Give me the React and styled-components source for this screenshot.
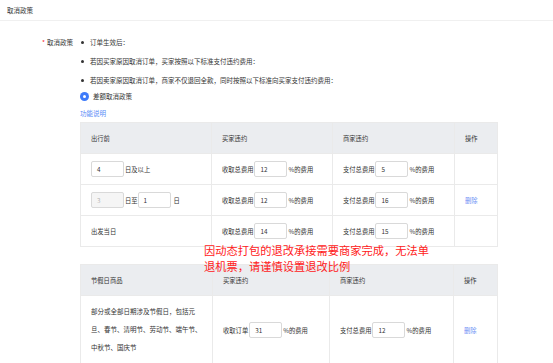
import React from "react";
import styled, { createGlobalStyle } from "styled-components";

const GlobalStyle = createGlobalStyle`
  body {
    margin: 0;
    background: #fff;
    font-family: "Noto Sans CJK SC", "Noto Sans", sans-serif;
    color: #333;
  }
`;

const Page = styled.div`
  position: relative;
  width: 553px;
  height: 363px;
  overflow: hidden;
  font-size: 6.5px;
`;

const TitleBar = styled.div`
  height: 20px;
  display: flex;
  align-items: center;
  padding-left: 7px;
  border-bottom: 1px solid #f0f0f0;
  color: #333;
`;

const FormRow = styled.div`
  display: flex;
  padding-top: 12px;
`;

const Label = styled.div`
  width: 80px;
  text-align: right;
  padding-right: 7px;
  box-sizing: border-box;
  line-height: 19px;
  &::before {
    content: "*";
    color: #f5222d;
    margin-right: 2px;
  }
`;

const Content = styled.div`
  flex: 1;
  display: flex;
  flex-direction: column;
`;

const Bullet = styled.div`
  line-height: 19px;
  display: flex;
  &::before {
    content: "";
    width: 3px;
    height: 3px;
    border-radius: 50%;
    background: #333;
    margin: 8px 6px 0 1px;
  }
`;

const Radio = styled.label`
  display: flex;
  align-items: center;
  gap: 4px;
  height: 12px;
`;

const RadioDot = styled.span`
  width: 9px;
  height: 9px;
  border-radius: 50%;
  background: #3e7bfa;
  display: flex;
  align-items: center;
  justify-content: center;
  &::after {
    content: "";
    width: 3px;
    height: 3px;
    border-radius: 50%;
    background: #fff;
  }
`;

const Link = styled.a`
  color: #5b8cf7;
  cursor: pointer;
  line-height: 18px;
  margin-top: 2px;
`;

const Table = styled.table`
  width: 417px;
  border-collapse: collapse;
  table-layout: fixed;
  font-size: 6.3px;
  margin-top: ${(p) => p.$top || 0}px;
  th, td {
    border: 1px solid #eaeaea;
    padding: 0 10px;
    text-align: left;
    font-weight: normal;
    box-sizing: border-box;
  }
  th {
    background: #ebedf0;
    height: 31px;
  }
  td {
    height: 31px;
  }
`;

const Cell = styled.div`
  display: flex;
  align-items: center;
  white-space: nowrap;
`;

const Input = styled.div`
  width: 33px;
  height: 16px;
  box-sizing: border-box;
  border: 1px solid #d9d9d9;
  border-radius: 2px;
  padding-left: 5px;
  display: flex;
  align-items: center;
  margin: ${(p) => p.$m || "0 1px 0 1px"};
  background: ${(p) => (p.$disabled ? "#f5f5f5" : "#fff")};
  color: ${(p) => (p.$disabled ? "#b5b5b5" : "#333")};
`;

const Delete = styled.a`
  color: #6f93f5;
`;

const HolidayText = styled.td`
  && {
    padding: 6px 10px 8px 10px;
    line-height: 18px;
    vertical-align: top;
    font-size: 6.5px;
  }
`;

const Notice = styled.div`
  position: absolute;
  left: 204px;
  top: 242px;
  color: #ff2020;
  font-size: 11.25px;
  line-height: 16px;
  width: 230px;
`;

const Cols = ({ w }) => (
  <colgroup>
    {w.map((x, i) => (
      <col key={i} style={{ width: x }} />
    ))}
  </colgroup>
);

const Fee = ({ label, value }) => (
  <Cell>
    {label}
    <Input>{value}</Input>
    %的费用
  </Cell>
);

const rows = [
  { day: <Cell><Input $m="0 1px 0 0">4</Input>日及以上</Cell>, buy: 12, sell: 5 },
  {
    day: <Cell><Input $m="0 1px 0 0" $disabled>3</Input>日至<Input $m="0 3px 0 0">1</Input>日</Cell>,
    buy: 12,
    sell: 16,
    del: true,
  },
  { day: <Cell>出发当日</Cell>, buy: 14, sell: 15 },
];

export default function App() {
  return (
    <Page>
      <GlobalStyle />
      <TitleBar>取消政策</TitleBar>
      <FormRow>
        <Label>取消政策</Label>
        <Content>
          <Bullet>订单生效后：</Bullet>
          <Bullet>若因买家原因取消订单，买家按照以下标准支付违约费用：</Bullet>
          <Bullet>若因卖家原因取消订单，商家不仅退回全款，同时按照以下标准向买家支付违约费用：</Bullet>
          <Radio>
            <RadioDot />
            差额取消政策
          </Radio>
          <Link>功能说明</Link>
          <Table $top={0}>
            <Cols w={[131, 121, 122, 43]} />
            <thead>
              <tr>
                <th>出行前</th>
                <th>买家违约</th>
                <th>商家违约</th>
                <th>操作</th>
              </tr>
            </thead>
            <tbody>
              {rows.map((r, i) => (
                <tr key={i}>
                  <td>{r.day}</td>
                  <td><Fee label="收取总费用" value={r.buy} /></td>
                  <td><Fee label="支付总费用" value={r.sell} /></td>
                  <td>{r.del && <Delete>删除</Delete>}</td>
                </tr>
              ))}
            </tbody>
          </Table>
          <Table $top={17}>
            <Cols w={[132, 117, 124, 44]} />
            <thead>
              <tr>
                <th>节假日商品</th>
                <th>买家违约</th>
                <th>商家违约</th>
                <th>操作</th>
              </tr>
            </thead>
            <tbody>
              <tr>
                <HolidayText>
                  部分或全部日期涉及节假日，包括元旦、春节、清明节、劳动节、端午节、中秋节、国庆节
                </HolidayText>
                <td><Fee label="收取订单" value={31} /></td>
                <td><Fee label="支付总费用" value={12} /></td>
                <td><Delete>删除</Delete></td>
              </tr>
            </tbody>
          </Table>
        </Content>
      </FormRow>
      <Notice>因动态打包的退改承接需要商家完成，无法单退机票，请谨慎设置退改比例</Notice>
    </Page>
  );
}
